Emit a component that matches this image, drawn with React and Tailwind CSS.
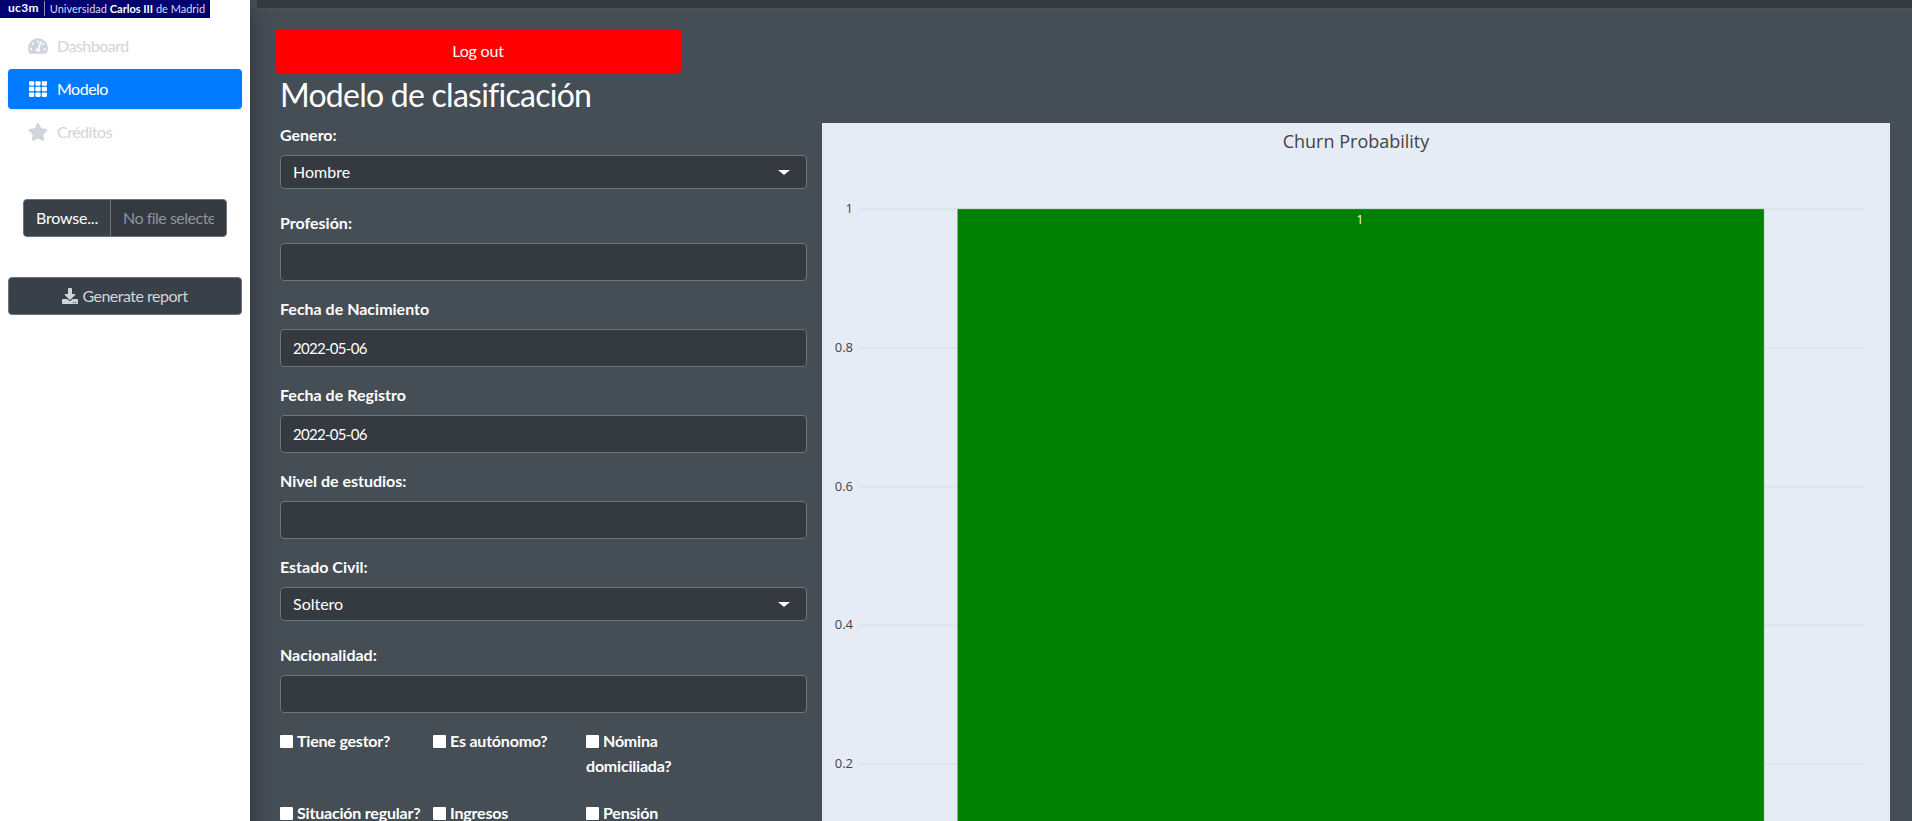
import { FaTachometerAlt, FaTh, FaStar, FaDownload } from 'react-icons/fa'

const FONT = "font-['Lato','Noto_Sans',sans-serif]"

function NavItem({ icon: Icon, label, active }) {
  return (
    <a
      className={`flex h-10 items-center rounded-[4px] mb-[3px] pl-[20px] text-[16px] tracking-[-0.5px] ${
        active ? 'bg-[#007bff] text-white shadow-sm' : 'text-[#d0d4db]'
      }`}
    >
      <Icon className="w-[20px] h-[18px] mr-[9px]" />
      {label}
    </a>
  )
}

function Label({ children }) {
  return <label className="block text-[16px] font-bold leading-6 text-white mb-[8px]">{children}</label>
}

function Field({ label, value, select, date, mb = 'mb-[16px]', h = 'h-[38px]' }) {
  return (
    <div className={mb}>
      <Label>{label}</Label>
      <div className={`flex ${h} w-[527px] items-center justify-between rounded-[4px] border border-[#6c757d] bg-[#343a40] pl-[12px] pr-[16px] text-white`}>
        <span className={date ? 'text-[15px] tracking-[-0.7px]' : 'text-[16px]'}>{value}</span>
        {select && <span className="h-0 w-0 border-x-[6px] border-t-[5px] border-x-transparent border-t-white" />}
      </div>
    </div>
  )
}

function Check({ children }) {
  return (
    <label className="block text-[16px] font-bold leading-[25px] text-white">
      <span className="mr-[4px] inline-block h-[13px] w-[13px] rounded-[1px] bg-white align-[-0.5px]" />
      {children}
    </label>
  )
}

function ChurnChart() {
  const ticks = [
    { label: '1', y: 86 },
    { label: '0.8', y: 225 },
    { label: '0.6', y: 364 },
    { label: '0.4', y: 502 },
    { label: '0.2', y: 641 },
  ]
  return (
    <svg width="1068" height="698" className="block" style={{ fontFamily: "'Open Sans', 'Noto Sans', sans-serif", letterSpacing: 0 }}>
      <text x="534" y="25" textAnchor="middle" fontSize="18" fill="#444">Churn Probability</text>
      {ticks.map((t) => (
        <g key={t.label}>
          <line x1="38" x2="1043" y1={t.y} y2={t.y} stroke="#dde3ec" strokeWidth="1.5" />
          <text x="31" y={t.y + 4} textAnchor="end" fontSize="13" fill="#444">{t.label}</text>
        </g>
      ))}
      <rect x="135.5" y="86" width="806.5" height="700" fill="#008000" stroke="#8fb58f" strokeWidth="0.5" />
      <text x="538" y="101" textAnchor="middle" fontSize="12" fill="#fff">1</text>
    </svg>
  )
}

export default function App() {
  return (
    <div className={`flex h-[821px] overflow-hidden bg-white ${FONT}`}>
      <aside className="relative z-10 w-[250px] shrink-0 bg-white shadow-[0_14px_28px_rgba(0,0,0,0.25),0_10px_10px_rgba(0,0,0,0.22)]">
        <div className="flex h-[18px] w-[210px] items-center gap-[5px] bg-[#00006e] pb-[2px] pl-[8px] text-[11px] leading-none text-[#d8d8ec]">
          <span className="text-[12px] font-bold tracking-[0.3px] text-white">uc3m</span>
          <span className="h-[15px] w-px bg-[#8a8ac0]" />
          <span className="whitespace-nowrap">
            Universidad <b className="text-white">Carlos III</b> de Madrid
          </span>
        </div>
        <nav className="mt-[8px] px-[8px]">
          <NavItem icon={FaTachometerAlt} label="Dashboard" />
          <NavItem icon={FaTh} label="Modelo" active />
          <NavItem icon={FaStar} label="Créditos" />
        </nav>
        <div className="ml-[23px] mt-[47px] flex h-[38px] w-[204px] rounded-[4px] border border-[#6c757d] bg-[#343a40] text-[16px] tracking-[-0.2px]">
          <span className="flex w-[87px] items-center justify-center rounded-l-[4px] border-r border-[#6c757d] bg-[#3a4047] text-white">Browse...</span>
          <span className="ml-[12px] w-[91px] overflow-hidden whitespace-nowrap leading-[36px] tracking-[-0.5px] text-[#8d949b]">No file selected</span>
        </div>
        <button className="mx-[8px] mt-[40px] flex h-[38px] w-[234px] items-center justify-center gap-[4px] rounded-[4px] border border-[#6c757d] bg-[#3a4047] text-[16px] tracking-[-0.5px] text-[#d0d4db]">
          <FaDownload className="h-[16px] w-[16px]" />
          Generate report
        </button>
      </aside>
      <main className="min-w-0 flex-1 bg-[#454d55]">
        <div className="ml-[7px] h-[9px] border-b border-[#4b545c] bg-[#343a40]" />
        <div className="pl-[25px] pr-[22px]">
          <button className="mt-[20px] block h-[44px] w-[406px] rounded-[4px] bg-[#ff0000] text-[16px] tracking-[-0.2px] text-white">Log out</button>
          <h1 className="ml-[5px] mt-[3px] text-[32px] font-normal leading-[38px] tracking-[-0.75px] text-white">Modelo de clasificación</h1>
          <div className="mt-[9px] flex">
            <div className="ml-[5px] w-[542px] shrink-0">
              <Field label="Genero:" value="Hombre" select h="h-[34px]" mb="mb-[22px]" />
              <Field label="Profesión:" mb="mb-[16px]" />
              <Field label="Fecha de Nacimiento" value="2022-05-06" date mb="mb-[16px]" />
              <Field label="Fecha de Registro" value="2022-05-06" date mb="mb-[16px]" />
              <Field label="Nivel de estudios:" mb="mb-[16px]" />
              <Field label="Estado Civil:" value="Soltero" select h="h-[34px]" mb="mb-[22px]" />
              <Field label="Nacionalidad:" mb="mb-[15px]" />
              <div className="grid w-[459px] grid-cols-3 tracking-[-0.2px]">
                <div className="h-[72px]"><Check>Tiene gestor?</Check></div>
                <div><Check>Es autónomo?</Check></div>
                <div><Check>Nómina domiciliada?</Check></div>
                <Check>Situación regular?</Check>
                <Check>Ingresos</Check>
                <Check>Pensión</Check>
              </div>
            </div>
            <div className="h-[760px] flex-1 bg-[#e5ecf6]">
              <ChurnChart />
            </div>
          </div>
        </div>
      </main>
    </div>
  )
}
